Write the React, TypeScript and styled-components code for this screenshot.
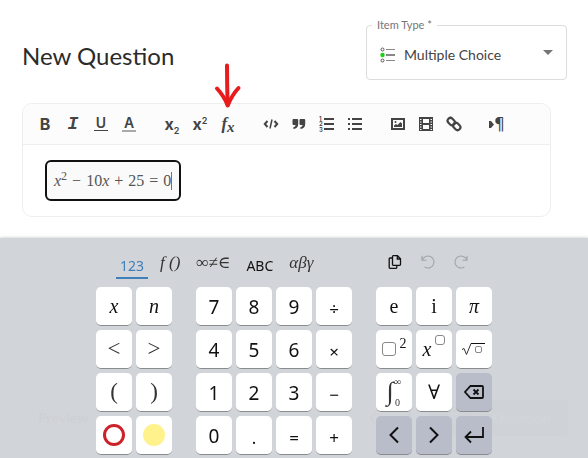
import React from 'react';
import styled, { createGlobalStyle, css } from 'styled-components';

const SERIF = '"Liberation Serif", "DejaVu Serif", serif';
const SANS = '"Noto Sans", "Open Sans", sans-serif';
const UI = 'Lato, "Open Sans", sans-serif';

const GlobalStyle = createGlobalStyle`
  * { box-sizing: border-box; }
  body { margin: 0; background: #fff; font-family: ${UI}; color: #2b2b2b; }
  button { font: inherit; color: inherit; padding: 0; border: 0; background: none; cursor: pointer; }
`;

const Page = styled.div`
  min-height: 100vh;
  display: flex;
  flex-direction: column;
  overflow: hidden;
`;

const Header = styled.header`
  display: flex;
  justify-content: space-between;
  align-items: flex-start;
  padding: 18px 21px 0 22px;
`;

const Title = styled.h1`
  margin: 22px 0 0;
  font-size: 24px;
  line-height: 32px;
  font-weight: 400;
`;

const TypeField = styled.fieldset`
  width: 201px;
  min-width: 0;
  height: 62px;
  margin: 0;
  padding: 0 13px;
  border: 1px solid #dcdcdc;
  border-radius: 4px;
`;

const TypeLegend = styled.legend`
  margin-left: -8px;
  padding: 0 5px;
  font-size: 11px;
  line-height: 14px;
  color: #757575;
`;

const TypeRow = styled.div`
  display: flex;
  align-items: center;
  height: 46px;
`;

const TypeSelect = styled.select`
  flex: 1;
  min-width: 0;
  height: 32px;
  padding: 0 0 0 8px;
  border: 0;
  outline: 0;
  appearance: none;
  background: transparent;
  font: 400 14px/20px ${UI};
  color: #444;
`;

const SelectArrow = styled.svg`
  margin-bottom: 6px;
`;

const Editor = styled.section`
  margin: 23px 37px 0 22px;
  border: 1px solid #eeeeee;
  border-radius: 10px;
`;

const Toolbar = styled.div`
  display: flex;
  gap: 15px;
  padding: 0 8px;
  background: #fcfcfc;
  border-bottom: 1px solid #eeeeee;
  border-radius: 10px 10px 0 0;
`;

const ToolGroup = styled.div`
  display: flex;
`;

const Tool = styled.button`
  position: relative;
  width: 28px;
  height: 40px;
  display: flex;
  align-items: center;
  justify-content: center;
  color: #444;
`;

const Letter = styled.span<{ $bar?: string; $face?: 'mono' | 'serif' | 'mark' }>`
  font: 700 16px/16px Inter, sans-serif;
  ${(p) => p.$face === 'mono' && css`font: italic 700 18px/18px "Liberation Mono", monospace;`}
  ${(p) => p.$face === 'serif' && css`font: italic 700 17px/18px ${SERIF};`}
  ${(p) => p.$face === 'mark' && css`font: 400 17px/18px "DejaVu Sans", sans-serif;`}
  ${(p) =>
    p.$bar &&
    css`
      font-weight: 600;
      font-size: 14px;
      line-height: 12px;
      padding: 0 2px 1px;
      border-bottom: ${p.$bar};
    `}
  sub, sup { font-size: 9px; line-height: 0; font-weight: 600; }
`;

const FxSub = styled.span`
  font-size: 15px;
  vertical-align: -3px;
  line-height: 0;
`;

const Arrow = styled.svg`
  position: absolute;
  left: 0;
  top: -42px;
  pointer-events: none;
`;

const EditorBody = styled.div`
  min-height: 71px;
  padding: 15px 22px;
`;

const MathField = styled.div`
  display: inline-flex;
  align-items: center;
  height: 41px;
  padding: 0 7px;
  border: 2px solid #111;
  border-radius: 6px;
  background: #fafafa;
  outline: none;
  font: 400 16px/20px ${SERIF};
  color: #555;
  white-space: pre;
  sup { font-size: 12px; line-height: 0; align-self: flex-start; margin-top: 14px; }
`;

const Op = styled.span`
  margin: 0 5px;
`;

const Caret = styled.span`
  width: 1px;
  height: 18px;
  background: #3b82c4;
`;

const FooterBar = styled.footer`
  display: flex;
  align-items: center;
  margin: 183px 20px 0;
  font: 700 14px/20px ${UI};
  color: #444;
`;

const FooterButton = styled.button<{ $filled?: boolean }>`
  height: 36px;
  padding: 0 18px;
  border-radius: 4px;
  ${(p) => p.$filled && css`background: #aaa; color: #fff;`}
`;

const Spacer = styled.span`
  flex: 1;
`;

const Keyboard = styled.section`
  position: fixed;
  left: 0;
  right: 0;
  bottom: 0;
  display: flex;
  flex-direction: column;
  align-items: center;
  padding-bottom: 3px;
  background: rgba(208, 211, 216, 0.98);
  box-shadow: 0 0 3px rgba(0, 0, 0, 0.25);
  color: #111;
`;

const KeyboardInner = styled.div`
  width: 396px;
`;

const TabBar = styled.div`
  display: flex;
  height: 49px;
  padding: 14px 22px 0 20px;
`;

const Tabs = styled.div`
  display: flex;
  flex: 1;
  gap: 8px;
  align-items: flex-start;
`;

const Tab = styled.button<{ $active?: boolean; $math?: boolean }>`
  height: 27px;
  padding: 2px 4px 0;
  border-bottom: 2px solid transparent;
  font: 400 14px/24px ${SANS};
  ${(p) => p.$math && css`font: italic 400 17px/20px ${SERIF}; padding-top: 0; padding-bottom: 3px; color: #333;`}
  ${(p) => p.$active && css`color: #3f7fba; border-bottom-color: #3f7fba;`}
`;

const Actions = styled.div`
  display: flex;
  gap: 17px;
`;

const Action = styled.button`
  width: 16px;
  height: 20px;
  display: flex;
  align-items: center;
  &:disabled { color: #a2a5a9; }
`;

const Keys = styled.div`
  display: flex;
  gap: 24px;
`;

const KeyGroup = styled.div<{ $cols: number }>`
  display: grid;
  grid-template-columns: repeat(${(p) => p.$cols}, 36px);
  grid-auto-rows: 39px;
  gap: 4px;
`;

type Face = 'digit' | 'op' | 'math' | 'roman' | 'thin';

const faces = {
  digit: css`font: 400 19px/24px ${SANS}; padding-top: 2px;`,
  op: css`font: 400 17px/24px ${SANS}; padding-top: 5px;`,
  math: css`font: italic 400 20px/24px ${SERIF};`,
  roman: css`font: 400 20px/24px ${SERIF};`,
  thin: css`font: 400 23px/24px ${SERIF}; color: #333;`,
};

const Key = styled.button<{ $face?: Face; $dark?: boolean }>`
  && {
    display: flex;
    align-items: center;
    justify-content: center;
    border-radius: 5px;
    border-bottom: 1px solid #898b8f;
    background: ${(p) => (p.$dark ? '#b9bdc9' : '#fff')};
    ${(p) => faces[p.$face ?? 'digit']}
  }
`;

const Placeholder = styled.span<{ $size: number }>`
  width: ${(p) => p.$size}px;
  height: ${(p) => p.$size}px;
  border: 1px solid #888;
  border-radius: 3px;
`;

const Raised = styled.span`
  display: flex;
  align-self: flex-start;
  margin: 5px 0 0 4px;
  font: 400 14px/18px ${SERIF};
`;

const Limits = styled.span`
  display: flex;
  flex-direction: column;
  justify-content: space-between;
  height: 30px;
  font: 400 10px/9px ${SERIF};
`;

const IntegralSign = styled.span`
  font-size: 26px;
`;

const Dot = styled.span<{ $ring?: boolean }>`
  width: 22px;
  height: 22px;
  border-radius: 50%;
  ${(p) => (p.$ring ? css`border: 3px solid #cc2229;` : css`background: #fff28c;`)}
`;

const ListIcon = () => (
  <svg width="16" height="16" viewBox="0 0 16 16" fill="none" aria-hidden="true">
    <circle cx="2.5" cy="2.5" r="1.5" stroke="#555" />
    <circle cx="2.5" cy="8" r="2.2" fill="#14d414" />
    <circle cx="2.5" cy="13.5" r="1.5" stroke="#555" />
    <path d="M6 2.5h9M6 13.5h9" stroke="#888" />
    <path d="M6 8h9" stroke="#111" />
  </svg>
);

const CodeIcon = () => (
  <svg width="16" height="16" viewBox="0 0 16 16" fill="none" stroke="currentColor" strokeWidth="2">
    <path d="M4.5 5 1.8 8l2.7 3M11.5 5l2.7 3-2.7 3" />
    <path d="M9 3.5 7 12.5" strokeWidth="1.5" />
  </svg>
);

const QuoteIcon = () => (
  <svg width="14" height="12" viewBox="0 0 14 12" fill="currentColor">
    <path d="M1.2 1h4.3l.7.8V6q0 4.5-4.8 5V9.2Q3.6 8.7 3.6 7H1.2L.5 6.2V1.8z" />
    <path d="M8.2 1h4.3l.7.8V6q0 4.5-4.8 5V9.2q2.2-.5 2.2-2.2H8.2l-.7-.8V1.8z" />
  </svg>
);

const OrderedIcon = () => (
  <svg width="16" height="16" viewBox="0 0 16 16" fill="currentColor">
    <path d="M5 2h10v2H5zM5 7h10v2H5zM5 12h10v2H5z" />
    <g fontFamily="Inter, sans-serif" fontSize="6" fontWeight="600">
      <text x="0" y="4.5">1</text>
      <text x="0" y="10">2</text>
      <text x="0" y="15.5">3</text>
    </g>
  </svg>
);

const BulletIcon = () => (
  <svg width="16" height="16" viewBox="0 0 16 16" fill="currentColor">
    <path d="M5 2h10v2H5zM5 7h10v2H5zM5 12h10v2H5zM1 2h2v2H1zM1 7h2v2H1zM1 12h2v2H1z" />
  </svg>
);

const ImageIcon = () => (
  <svg width="14" height="12" viewBox="0 0 14 12">
    <rect x="1" y="1" width="12" height="10" fill="none" stroke="currentColor" strokeWidth="2" />
    <path d="M3 9V7.5l2-1.5 1.5 1L9.5 4 11 5.5V9z" fill="currentColor" />
    <circle cx="4.5" cy="4" r="1" fill="currentColor" />
  </svg>
);

const FilmIcon = () => (
  <svg width="14" height="14" viewBox="0 0 14 14">
    <path
      fill="currentColor"
      fillRule="evenodd"
      d="M0 0h14v14H0zM4 2v4h6V2zM4 8v4h6V8zM1 2v1h1.500V2zM1 4.500v1h1.500v-1zM1 7v1h1.500V7zM1 9.500v1h1.500v-1zM1 12v1h1.500v-1zM11.500 2v1H13V2zM11.500 4.500v1H13v-1zM11.500 7v1H13V7zM11.500 9.500v1H13v-1zM11.500 12v1H13v-1z"
    />
  </svg>
);

const LinkIcon = () => (
  <svg width="16" height="16" viewBox="0 0 16 16" fill="none" stroke="currentColor" strokeWidth="2.2">
    <rect x="1.3" y="2.8" width="8" height="5.6" rx="2.8" transform="rotate(45 5.3 5.6)" />
    <rect x="6.7" y="7.6" width="8" height="5.6" rx="2.8" transform="rotate(45 10.7 10.4)" />
  </svg>
);

const PlayIcon = () => (
  <svg width="5" height="7" viewBox="0 0 5 7" fill="currentColor">
    <path d="M0 0h2l3 3.500L2 7H0z" />
  </svg>
);

const CopyIcon = () => (
  <svg width="14" height="14" viewBox="0 0 14 14" fill="none" stroke="currentColor" strokeWidth="1.3">
    <path d="M4.500 1.500q0-.8.8-.8H9.500L12.500 3.700V9.500q0 .8-.8.8H5.300q-.8 0-.8-.8z" />
    <path d="M9.300.7V4h3.200M4.300 3H2q-.8 0-.8.8v8.700q0 .8.8.8h6q.8 0 .8-.8v-2" />
  </svg>
);

const UndoIcon = ({ flip }: { flip?: boolean }) => (
  <svg width="14" height="14" viewBox="0 0 14 14" fill="none" stroke="currentColor" strokeWidth="1.1">
    <g transform={flip ? 'translate(14 0) scale(-1 1)' : undefined}>
      <path d="M1 .8v4.400h4.400M1.300 5A6 6 0 1 1 3.600 12" />
    </g>
  </svg>
);

const RootIcon = () => (
  <svg width="24" height="16" viewBox="0 0 24 16" fill="none" stroke="#333">
    <path d="M0 8.500 2 7.500 4.500 13.500 9 2.500" />
    <path d="M9 2.500h14" stroke="#111" />
    <rect x="13.500" y="5.500" width="6" height="6" rx="1.500" stroke="#888" />
  </svg>
);

const BackspaceIcon = () => (
  <svg width="20" height="14" viewBox="0 0 20 14" fill="none" stroke="#111" strokeWidth="1.8">
    <path d="M6.500 1H18q1 0 1 1v10q0 1-1 1H6.500L1 7z" />
    <path d="m9.500 4.500 5 5m0-5-5 5" />
  </svg>
);

const ChevronIcon = ({ right }: { right?: boolean }) => (
  <svg width="10" height="18" viewBox="0 0 10 18" fill="none" stroke="#111" strokeWidth="2">
    <path d={right ? 'M1 1.500 8.500 9 1 16.500' : 'M9 1.500 1.500 9 9 16.500'} />
  </svg>
);

const EnterIcon = () => (
  <svg width="20" height="18" viewBox="0 0 20 18" fill="none" stroke="#111" strokeWidth="1.8">
    <path d="M19 1v10H1.500M7 5.500 1.500 11 7 16.500" />
  </svg>
);

const tabs = [
  { label: '123', active: true },
  { label: 'f ()', math: true },
  { label: '∞≠∈', math: true },
  { label: 'ABC' },
  { label: 'αβγ', math: true },
];

const pad = ['7', '8', '9', '÷', '4', '5', '6', '×', '1', '2', '3', '−', '0', '.', '=', '+'];

export default function App() {
  return (
    <Page>
      <GlobalStyle />
      <Header>
        <Title>New Question</Title>
        <TypeField>
          <TypeLegend>
            <label htmlFor="item-type">Item Type *</label>
          </TypeLegend>
          <TypeRow>
            <ListIcon />
            <TypeSelect id="item-type" defaultValue="mc">
              <option value="mc">Multiple Choice</option>
            </TypeSelect>
            <SelectArrow width="10" height="5" viewBox="0 0 10 5" fill="#757575" aria-hidden="true">
              <path d="M0 0h10L5 5z" />
            </SelectArrow>
          </TypeRow>
        </TypeField>
      </Header>

      <Editor>
        <Toolbar role="toolbar">
          <ToolGroup>
            <Tool aria-label="Bold"><Letter>B</Letter></Tool>
            <Tool aria-label="Italic"><Letter $face="mono">I</Letter></Tool>
            <Tool aria-label="Underline"><Letter $bar="1px solid #444">U</Letter></Tool>
            <Tool aria-label="Text color"><Letter $bar="2px solid #aaa">A</Letter></Tool>
          </ToolGroup>
          <ToolGroup>
            <Tool aria-label="Subscript"><Letter>x<sub>2</sub></Letter></Tool>
            <Tool aria-label="Superscript"><Letter>x<sup>2</sup></Letter></Tool>
            <Tool aria-label="Formula">
              <Letter $face="serif">f<FxSub>x</FxSub></Letter>
              <Arrow width="28" height="48" viewBox="0 0 28 48" fill="none" stroke="#e81c1c" strokeWidth="4" strokeLinecap="round" strokeLinejoin="round" aria-hidden="true">
                <path d="M13 3.500Q13 24 13.700 43" />
                <path d="M3 26.500Q10 34 13.700 43.500 18 33 24.500 26" />
              </Arrow>
            </Tool>
          </ToolGroup>
          <ToolGroup>
            <Tool aria-label="Code"><CodeIcon /></Tool>
            <Tool aria-label="Quote"><QuoteIcon /></Tool>
            <Tool aria-label="Ordered list"><OrderedIcon /></Tool>
            <Tool aria-label="Bulleted list"><BulletIcon /></Tool>
          </ToolGroup>
          <ToolGroup>
            <Tool aria-label="Image"><ImageIcon /></Tool>
            <Tool aria-label="Video"><FilmIcon /></Tool>
            <Tool aria-label="Link"><LinkIcon /></Tool>
          </ToolGroup>
          <ToolGroup>
            <Tool aria-label="Text direction"><PlayIcon /><Letter $face="mark">¶</Letter></Tool>
          </ToolGroup>
        </Toolbar>
        <EditorBody>
          <MathField role="textbox" aria-label="Formula" tabIndex={0}>
            <i>x</i><sup>2</sup><Op>−</Op>10<i>x</i><Op>+</Op>25<Op>=</Op>0<Caret />
          </MathField>
        </EditorBody>
      </Editor>

      <FooterBar>
        <FooterButton>Preview</FooterButton>
        <Spacer />
        <FooterButton>Cancel</FooterButton>
        <FooterButton $filled>Create Question</FooterButton>
      </FooterBar>

      <Keyboard aria-label="Math keyboard">
        <KeyboardInner>
          <TabBar>
            <Tabs>
              {tabs.map((t) => (
                <Tab key={t.label} $active={t.active} $math={t.math}>{t.label}</Tab>
              ))}
            </Tabs>
            <Actions>
              <Action aria-label="Copy"><CopyIcon /></Action>
              <Action aria-label="Undo" disabled><UndoIcon /></Action>
              <Action aria-label="Redo" disabled><UndoIcon flip /></Action>
            </Actions>
          </TabBar>
          <Keys>
            <KeyGroup $cols={2}>
              <Key $face="math">x</Key>
              <Key $face="math">n</Key>
              <Key $face="thin">&lt;</Key>
              <Key $face="thin">&gt;</Key>
              <Key $face="thin">(</Key>
              <Key $face="thin">)</Key>
              <Key aria-label="Red outline" $face="math"><Dot $ring /></Key>
              <Key aria-label="Yellow highlight" $face="math"><Dot /></Key>
            </KeyGroup>
            <KeyGroup $cols={4}>
              {pad.map((k) => (
                <Key key={k} $face={/\d/.test(k) ? 'digit' : 'op'}>{k}</Key>
              ))}
            </KeyGroup>
            <KeyGroup $cols={3}>
              <Key $face="roman">e</Key>
              <Key $face="roman">i</Key>
              <Key $face="math">π</Key>
              <Key $face="math" aria-label="Square"><Placeholder $size={14} /><Raised>2</Raised></Key>
              <Key $face="math" aria-label="Power">x<Raised><Placeholder $size={10} /></Raised></Key>
              <Key $face="math" aria-label="Square root"><RootIcon /></Key>
              <Key $face="thin"><IntegralSign>∫</IntegralSign><Limits><span>∞</span><span>0</span></Limits></Key>
              <Key $face="roman">∀</Key>
              <Key $face="math" $dark aria-label="Backspace"><BackspaceIcon /></Key>
              <Key $face="math" $dark aria-label="Left"><ChevronIcon /></Key>
              <Key $face="math" $dark aria-label="Right"><ChevronIcon right /></Key>
              <Key $face="math" $dark aria-label="Enter"><EnterIcon /></Key>
            </KeyGroup>
          </Keys>
        </KeyboardInner>
      </Keyboard>
    </Page>
  );
}
